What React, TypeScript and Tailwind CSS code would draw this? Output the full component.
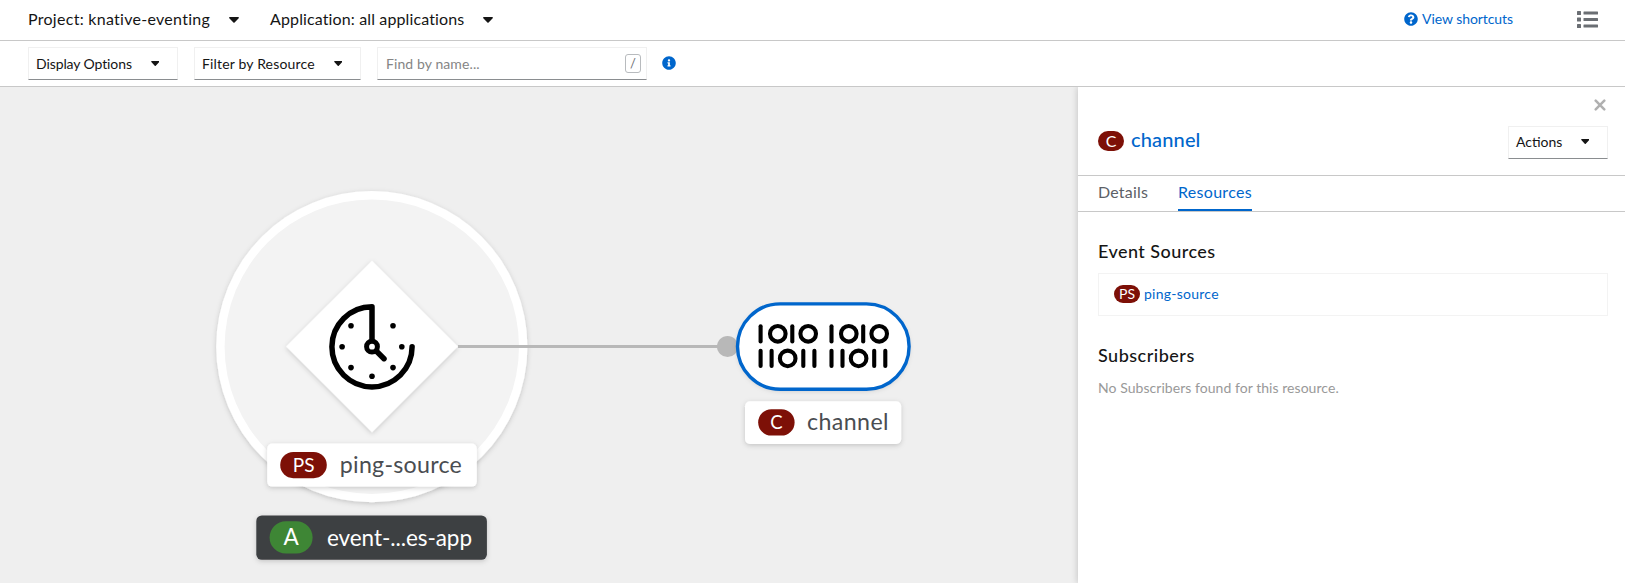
import { FaInfoCircle, FaQuestionCircle } from 'react-icons/fa';

function Caret({ className = '' }: { className?: string }) {
  return (
    <svg viewBox="0 0 10 6" className={`shrink-0 fill-[#151515] ${className}`}>
      <path d="M0.9 0H9.1C9.9 0 10.2 0.8 9.7 1.3L5.6 5.6Q5 6.1 4.4 5.6L0.3 1.3C-0.2 0.8 0.1 0 0.9 0Z" />
    </svg>
  );
}

function SelectButton({ label, className, textClass }: { label: string; className: string; textClass: string }) {
  return (
    <button
      className={`flex h-[33px] items-center justify-between border border-[#f0f0f0] border-b-[#8a8d90] pl-[7px] pr-[18px] text-sm text-[#151515] ${className}`}
    >
      <span className={textClass}>{label}</span>
      <Caret className="mb-px h-[5px] w-[8.5px]" />
    </button>
  );
}

function Header() {
  return (
    <header className="flex h-[41px] shrink-0 items-center border-b border-[#c8c8c8] pl-7 pr-[27px] pb-[2px]">
      <button className="flex w-[242px] items-center">
        <span className="w-[201px] text-left tracking-[0.28px]">Project: knative-eventing</span>
        <Caret className="mt-px h-[6px] w-[10px]" />
      </button>
      <button className="flex items-center">
        <span className="w-[213px] text-left tracking-[0.13px]">Application: all applications</span>
        <Caret className="mt-px h-[6px] w-[10px]" />
      </button>
      <a className="ml-auto flex items-center text-sm text-[#0066cc]">
        <FaQuestionCircle className="mr-[4px] size-[14px]" />
        <span className="w-[91px] whitespace-nowrap tracking-[-0.06px]">View shortcuts</span>
      </a>
      <svg viewBox="0 0 21 17" className="ml-[64px] h-[17px] w-[21px] fill-[#6a6e73]">
        {[0, 6.5, 13].map((y) => (
          <g key={y}>
            <rect x="0" y={y} width="4" height="4" rx="0.5" />
            <rect x="6.5" y={y + 0.6} width="14.5" height="2.8" rx="0.5" />
          </g>
        ))}
      </svg>
    </header>
  );
}

function Toolbar() {
  return (
    <div className="flex h-[46px] shrink-0 items-start border-b border-[#c8c8c8] pl-7 pt-[6px]">
      <SelectButton label="Display Options" className="w-[150px]" textClass="tracking-[-0.1px]" />
      <SelectButton label="Filter by Resource" className="ml-4 w-[167px]" textClass="tracking-[0.17px]" />
      <div className="ml-4 flex h-[33px] w-[270px] items-center justify-between border border-[#f0f0f0] border-b-[#8a8d90] pl-2 pr-[5px] text-sm text-[#858585]">
        <span className="tracking-[0.1px]">Find by name...</span>
        <kbd className="flex h-[19px] w-4 items-center justify-center rounded-[3px] border border-[#b8bbbe] font-[Lato] text-[13px] text-[#6a6e73]">
          /
        </kbd>
      </div>
      <FaInfoCircle className="ml-[15px] mt-[9px] size-[14px] text-[#0066cc]" />
    </div>
  );
}

const binaryBars = [
  [760.6, 333.8], [792.3, 333.8], [831.5, 333.8], [863.2, 333.8],
  [760.6, 358.4], [771.6, 358.4], [803.3, 358.4], [814.4, 358.4],
  [831.5, 358.4], [842.5, 358.4], [874.2, 358.4], [885.3, 358.4],
];
const binaryRings = [
  [777.8, 333.8], [808.2, 333.8], [848.8, 333.8], [879.2, 333.8],
  [787.7, 358.4], [858.6, 358.4],
];
const clockDots = [
  [351, 325.8], [393, 325.8], [342.1, 346.7], [401.8, 346.7],
  [351, 367.6], [393, 367.6], [372, 376.3],
];

function Topology() {
  return (
    <main className="min-w-0 flex-1 bg-[#efefef]">
      <svg viewBox="0 87 1078 496" className="block h-[496px] w-[1078px]" fontFamily="Lato, sans-serif">
        <defs>
          <filter id="shadow" x="-20%" y="-20%" width="140%" height="140%">
            <feDropShadow dx="0" dy="1.5" stdDeviation="2.6" floodColor="#030303" floodOpacity="0.18" />
          </filter>
        </defs>

        <circle cx="371.8" cy="346.7" r="155.6" fill="#fff" filter="url(#shadow)" />
        <circle cx="371.8" cy="346.7" r="147.2" fill="#f3f3f3" />

        <path d="M372 260.8L457.8 346.5L372 432.3L286.2 346.5Z" fill="#fff" filter="url(#shadow)" />
        <g fill="none" stroke="#000" strokeWidth="5.5" strokeLinecap="round" strokeLinejoin="round">
          <path d="M372 346V306.7A40.1 40.1 0 1 0 412.1 346.8" />
          <path d="M372 346.7L384 358.7" />
          <circle cx="372" cy="346.7" r="5.4" fill="#fff" strokeWidth="5" />
        </g>
        {clockDots.map(([x, y]) => (
          <circle key={`${x}-${y}`} cx={x} cy={y} r="2.8" />
        ))}

        <path d="M458 346.5H720" stroke="#b8b8b8" strokeWidth="3" />
        <circle cx="727.6" cy="346.5" r="10.6" fill="#b8b8b8" />

        <rect x="737.5" y="303.9" width="171.6" height="85.4" rx="42.7" fill="#fff" filter="url(#shadow)" />
        <rect x="737.5" y="303.9" width="171.6" height="85.4" rx="42.7" fill="#fff" stroke="#0066cc" strokeWidth="3.4" />
        <g fill="none" stroke="#000" strokeWidth="4.1" strokeLinecap="round">
          {binaryBars.map(([x, y]) => (
            <path key={`${x}-${y}`} d={`M${x} ${y - 7.6}V${y + 7.6}`} />
          ))}
          {binaryRings.map(([x, y]) => (
            <circle key={`${x}-${y}`} cx={x} cy={y} r="7.8" />
          ))}
        </g>

        <rect x="267.2" y="443.6" width="209.6" height="43" rx="5" fill="#fff" filter="url(#shadow)" />
        <rect x="280.2" y="452" width="46.6" height="26.2" rx="13.1" fill="#7d1007" />
        <text x="303.6" y="472" fontSize="19" textAnchor="middle" fill="#fff">PS</text>
        <text x="339.8" y="472.7" fontSize="23.2" textLength="122" fill="#4a4d51">ping-source</text>

        <rect x="256.3" y="515.4" width="230.6" height="44.4" rx="5.5" fill="#3c3f42" filter="url(#shadow)" />
        <rect x="269.6" y="521.2" width="43" height="32.4" rx="16.2" fill="#3e8635" />
        <text x="291" y="545" fontSize="22.5" textAnchor="middle" fill="#fff">A</text>
        <text x="327" y="545.5" fontSize="22.5" textLength="145" fill="#fff">event-...es-app</text>

        <rect x="745" y="401.2" width="156.2" height="42.8" rx="5" fill="#fff" filter="url(#shadow)" />
        <rect x="758.2" y="409.2" width="36.4" height="26.4" rx="13.2" fill="#7d1007" />
        <text x="776.4" y="429" fontSize="18.5" textAnchor="middle" fill="#fff">C</text>
        <text x="807" y="429.8" fontSize="23.2" textLength="81.5" fill="#4a4d51">channel</text>
      </svg>
    </main>
  );
}

function DetailsPanel() {
  return (
    <aside className="relative flex w-[547px] shrink-0 flex-col bg-white shadow-[-1px_0_6px_rgba(3,3,3,0.16)]">
      <div className="flex h-[89px] shrink-0 flex-col border-b border-[#c8c8c8] pl-5 pr-[17px]">
        <svg viewBox="0 0 12 12" className="mr-[2px] mt-3 size-3 self-end stroke-[#b0b0b0]" strokeWidth="2.5" strokeLinecap="round">
          <path d="M1.7 1.7L10.3 10.3M10.3 1.7L1.7 10.3" />
        </svg>
        <div className="mt-[15px] flex">
          <span className="mt-[5px] flex h-5 w-[26px] items-center justify-center rounded-[10px] bg-[#7d1007] text-base text-white">
            C
          </span>
          <a className="ml-[7px] mt-[-1px] text-xl font-medium leading-[28px] tracking-[0.15px] text-[#0066cc]">channel</a>
          <SelectButton label="Actions" className="ml-auto w-[100px] pb-px" textClass="tracking-[0px]" />
        </div>
      </div>
      <nav className="flex h-[36px] shrink-0 border-b border-[#c8c8c8] pl-5">
        <span className="w-[80px] pt-[4px] text-base tracking-[0.2px] text-[#5c6066]">Details</span>
        <span className="h-[35px] w-[74px] whitespace-nowrap border-b-2 border-[#0066cc] pt-[4px] text-base tracking-[0.3px] text-[#0066cc]">
          Resources
        </span>
      </nav>
      <div className="pl-5 pr-[17px] pt-[26px]">
        <h2 className="text-lg font-medium leading-[27px] tracking-[0.45px]">Event Sources</h2>
        <div className="mt-[8px] flex h-[43px] items-center border border-[#f3f3f3] pb-px pl-[15px] text-sm">
          <span className="flex h-[18px] w-[26px] items-center justify-center rounded-full bg-[#7d1007] text-sm text-white">
            PS
          </span>
          <a className="ml-1 tracking-[0.25px] text-[#0066cc]">ping-source</a>
        </div>
        <h2 className="mt-[26px] text-lg font-medium leading-[27px] tracking-[0.5px]">Subscribers</h2>
        <p className="mt-[8px] text-sm leading-[21px] tracking-[0.05px] text-[#999]">No Subscribers found for this resource.</p>
      </div>
    </aside>
  );
}

export default function App() {
  return (
    <div className="flex h-[583px] w-[1625px] flex-col overflow-hidden bg-white font-[Lato,sans-serif] text-base text-[#151515]">
      <Header />
      <Toolbar />
      <div className="flex min-h-0 flex-1 overflow-hidden">
        <Topology />
        <DetailsPanel />
      </div>
    </div>
  );
}
